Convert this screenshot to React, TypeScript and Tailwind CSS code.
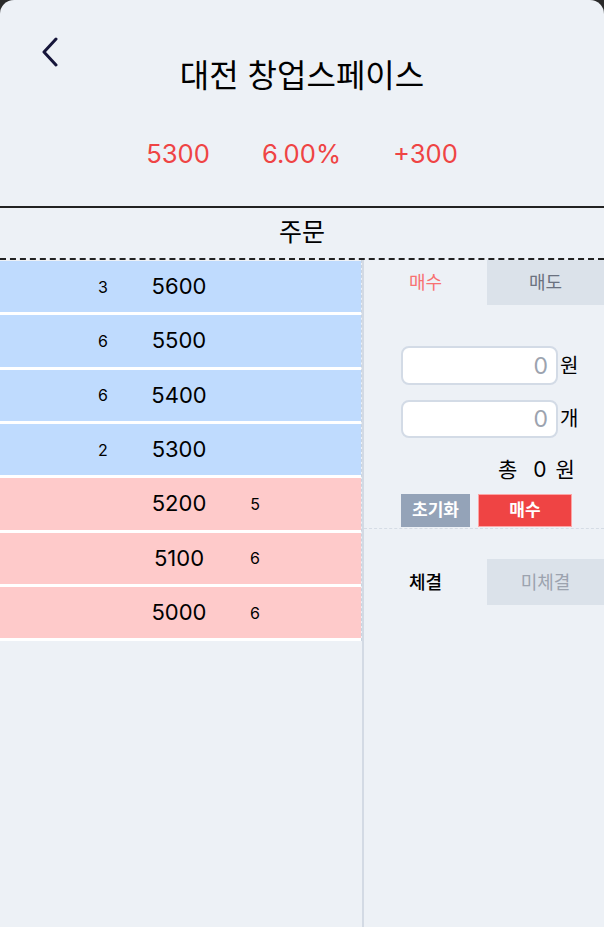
import { useState } from 'react';

const asks = [
  { price: 5600, qty: 3 },
  { price: 5500, qty: 6 },
  { price: 5400, qty: 6 },
  { price: 5300, qty: 2 },
];

const bids = [
  { price: 5200, qty: 5 },
  { price: 5100, qty: 6 },
  { price: 5000, qty: 6 },
];

function BackIcon() {
  return (
    <svg width="20" height="30" viewBox="0 0 20 30" fill="none">
      <path d="M16 2 L4 15 L16 28" stroke="#16163a" strokeWidth="3" strokeLinecap="round" strokeLinejoin="round" />
    </svg>
  );
}

function OrderRow({ price, qty, side }: { price: number; qty: number; side: 'ask' | 'bid' }) {
  return (
    <div
      className={`grid grid-cols-[65px_76px_76px_76px_1fr] items-center h-[54.33px] border-b-[3px] border-white ${
        side === 'ask' ? 'bg-[#bfdbfe]' : 'bg-[#fecaca]'
      }`}
    >
      <div />
      <div className="text-center text-[16px]">{side === 'ask' ? qty : ''}</div>
      <div className="text-center text-[22px]">{price}</div>
      <div className="text-center text-[16px]">{side === 'bid' ? qty : ''}</div>
      <div />
    </div>
  );
}

export default function App() {
  const [tab, setTab] = useState<'buy' | 'sell'>('buy');
  const [listTab, setListTab] = useState<'done' | 'open'>('done');
  const [price, setPrice] = useState('');
  const [count, setCount] = useState('');

  const total = (Number(price) || 0) * (Number(count) || 0);

  return (
    <div className="bg-[#2a2a2a] min-h-[927px]">
      <div className="relative flex flex-col min-h-[927px] bg-[#edf1f6] rounded-t-[14px] text-black font-['Inter','Noto_Sans_CJK_KR',sans-serif]">
        {/* Header */}
        <div className="relative h-[208px] flex flex-col items-center border-b-2 border-[#222]">
          <button type="button" className="absolute left-[40px] top-[37px]">
            <BackIcon />
          </button>
          <h1 className="pt-[56px] text-[32px] leading-[40px] font-normal">대전 창업스페이스</h1>
          <div className="mt-[42px] flex items-center gap-[52px] text-[25.6px] leading-[32px] text-[#ef4444]">
            <span>5300</span>
            <span>6.00%</span>
            <span>+300</span>
          </div>
        </div>

        {/* Section title */}
        <div className="h-[52px] flex items-center justify-center text-[25px] border-b-2 border-dashed border-[#222]">
          주문
        </div>

        <div className="flex flex-1">
          {/* Order book */}
          <div className="w-[362px] self-start pt-px border-r border-dashed border-[#c9d3df]">
            {asks.map(r => (
              <OrderRow key={r.price} price={r.price} qty={r.qty} side="ask" />
            ))}
            {bids.map(r => (
              <OrderRow key={r.price} price={r.price} qty={r.qty} side="bid" />
            ))}
          </div>

          {/* Order form */}
          <div className="flex-1 flex flex-col border-l-2 border-[#d3dae4]">
            <div className="flex h-[45px] text-[18px]">
              <button
                type="button"
                onClick={() => setTab('buy')}
                className={`w-[123px] ${tab === 'buy' ? 'text-[#f87171]' : 'bg-[#dbe2ea] text-[#6b7280]'}`}
              >
                매수
              </button>
              <button
                type="button"
                onClick={() => setTab('sell')}
                className={`flex-1 ${tab === 'sell' ? 'text-[#3b82f6]' : 'bg-[#dbe2ea] text-[#6b7280]'}`}
              >
                매도
              </button>
            </div>

            <div className="pl-[37px] pt-[41px] border-b border-dashed border-[#d5dce5] pb-px">
              <div className="flex items-center gap-[2px]">
                <input
                  value={price}
                  onChange={e => setPrice(e.target.value)}
                  placeholder="0"
                  className="w-[157px] h-[39px] rounded-lg border-2 border-[#d3dbe6] bg-white pr-[8px] text-right text-[23px] placeholder:text-[#9ca3af] outline-none"
                />
                <span className="text-[20px]">원</span>
              </div>
              <div className="mt-[15px] flex items-center gap-[2px]">
                <input
                  value={count}
                  onChange={e => setCount(e.target.value)}
                  placeholder="0"
                  className="w-[157px] h-[38px] rounded-lg border-2 border-[#d3dbe6] bg-white pr-[8px] text-right text-[23px] placeholder:text-[#9ca3af] outline-none"
                />
                <span className="text-[20px]">개</span>
              </div>
              <div className="mt-[18px] pl-[97px] flex items-center text-[21px] leading-[28px]">
                <span className="mr-[16px]">총</span>
                <span className="mr-[9px]">{total}</span>
                <span>원</span>
              </div>
              <div className="mt-[10px] flex gap-[8px]">
                <button
                  type="button"
                  onClick={() => {
                    setPrice('');
                    setCount('');
                  }}
                  className="w-[69px] h-[33px] bg-[#94a3b8] text-white text-[17px] font-semibold"
                >
                  초기화
                </button>
                <button
                  type="button"
                  className="w-[94px] h-[33px] bg-[#ef4444] border border-[#fca5a5] text-white text-[17px] font-semibold"
                >
                  {tab === 'buy' ? '매수' : '매도'}
                </button>
              </div>
            </div>

            <div className="mt-[30px] flex h-[46px] text-[18px]">
              <button
                type="button"
                onClick={() => setListTab('done')}
                className={`w-[123px] ${listTab === 'done' ? 'font-medium' : 'bg-[#dbe2ea] text-[#9ca3af]'}`}
              >
                체결
              </button>
              <button
                type="button"
                onClick={() => setListTab('open')}
                className={`flex-1 ${listTab === 'open' ? 'font-medium' : 'bg-[#dbe2ea] text-[#9ca3af]'}`}
              >
                미체결
              </button>
            </div>
          </div>
        </div>
      </div>
    </div>
  );
}
